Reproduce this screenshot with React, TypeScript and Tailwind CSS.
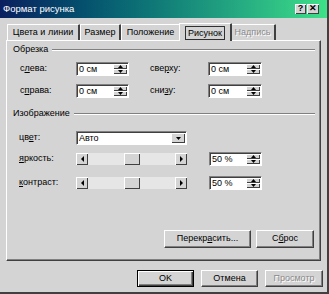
import React from "react";

const raised =
  "border border-t-white border-l-white border-r-[#404040] border-b-[#404040] shadow-[inset_-1px_-1px_0_#808080]";
const sunken =
  "border border-t-[#808080] border-l-[#808080] border-r-white border-b-white shadow-[inset_1px_1px_0_#404040]";
const softRaised = "bg-[#d4d4d4] shadow-[inset_1px_1px_0_#ffffff,inset_-1px_-1px_0_#404040]";

function Tri({ dir }: { dir: "up" | "down" | "left" | "right" }) {
  const d =
    dir === "up"
      ? "M0 3 L2.5 0 L5 3 Z"
      : dir === "down"
      ? "M0 0 L5 0 L2.5 3 Z"
      : dir === "left"
      ? "M3 0 L3 6 L0 3 Z"
      : "M0 0 L0 6 L3 3 Z";
  const w = dir === "up" || dir === "down" ? 5 : 3;
  const h = dir === "up" || dir === "down" ? 3 : 6;
  return (
    <svg width={w} height={h} viewBox={`0 0 ${w} ${h}`}>
      <path d={d} fill="#000" />
    </svg>
  );
}

function Spin({ value, w }: { value: string; w: string }) {
  return (
    <div className={`${w} h-full bg-white flex ${sunken}`}>
      <div className="flex-1 flex items-center pl-[2px] pt-[1px]">{value}</div>
      <div className="w-[15px] h-full flex flex-col py-[1px] pr-[1px]">
        <div className={`flex-1 flex items-center justify-center ${softRaised}`}>
          <Tri dir="up" />
        </div>
        <div className={`flex-1 flex items-center justify-center ${softRaised}`}>
          <Tri dir="down" />
        </div>
      </div>
    </div>
  );
}

function Scroll() {
  return (
    <div className="w-[111px] h-[12px] flex bg-[#e6e6e6]">
      <div className={`w-[12px] h-[12px] flex items-center justify-center ${softRaised}`}>
        <Tri dir="left" />
      </div>
      <div className="w-[36px]" />
      <div className={`w-[16px] h-[12px] ${softRaised}`} />
      <div className="flex-1" />
      <div className={`w-[12px] h-[12px] flex items-center justify-center ${softRaised}`}>
        <Tri dir="right" />
      </div>
    </div>
  );
}

function Group({ title }: { title: string }) {
  return (
    <div className="h-[12px] flex items-center pl-[6px] pr-[5px]">
      <span className="pr-[4px]">{title}</span>
      <div className="flex-1 h-[2px] border-t border-t-[#808080] border-b border-b-white" />
    </div>
  );
}

function Btn({
  children,
  w,
  def,
  disabled,
}: {
  children: React.ReactNode;
  w: string;
  def?: boolean;
  disabled?: boolean;
}) {
  return (
    <div
      className={`${w} h-full flex items-center justify-center ${
        def
          ? "border border-black shadow-[inset_1px_1px_0_#ffffff,inset_-1px_-1px_0_#404040,inset_-2px_-2px_0_#808080]"
          : raised
      } ${disabled ? "text-[#8a8a8a] [text-shadow:1px_1px_0_#fff]" : ""}`}
    >
      {children}
    </div>
  );
}

function Tab({
  children,
  w,
  active,
  disabled,
}: {
  children: React.ReactNode;
  w: string;
  active?: boolean;
  disabled?: boolean;
}) {
  return (
    <div
      className={`${w} ${
        active ? "h-[18px] -mb-[1px] -mx-[2px] relative z-10 bg-[#d4d4d4]" : "h-[16px]"
      } flex items-center justify-center border-t border-l border-t-white border-l-white border-r-2 border-r-[#404040] rounded-t-[1px] ${
        disabled ? "text-[#8a8a8a] [text-shadow:1px_1px_0_#fff]" : ""
      }`}
    >
      {active ? (
        <span className="border border-[#303030] px-[2px] leading-[10px] py-[1px]">{children}</span>
      ) : (
        children
      )}
    </div>
  );
}

export default function App() {
  return (
    <div className="w-[329px] h-[294px] bg-[#d4d4d4] font-['Liberation_Sans',Arial,sans-serif] text-[9px] text-black overflow-hidden flex flex-col border-r-2 border-b-2 border-r-[#404040] border-b-[#404040]">
      {/* title bar */}
      <div className="h-[18px] shrink-0 flex items-center pl-[3px] pr-[8px] bg-gradient-to-r from-[#0a1f5e] via-[#127e78] to-[#3ee088] text-white text-[9.5px]">
        <span className="flex-1">Формат рисунка</span>
        <div className={`w-[11px] h-[10px] flex items-center justify-center text-black font-bold text-[9px] ${softRaised}`}>?</div>
        <div className={`ml-[1px] w-[12px] h-[10px] flex items-center justify-center text-black font-bold text-[9px] ${softRaised}`}>✕</div>
      </div>

      {/* tabs */}
      <div className="mt-[5px] h-[17px] flex items-end pl-[7px]">
        <Tab w="w-[73px]">Цвета и линии</Tab>
        <Tab w="w-[41px]">Размер</Tab>
        <Tab w="w-[60px]">Положение</Tab>
        <Tab w="w-[53px]" active>Рисунок</Tab>
        <Tab w="w-[46px]">
          <span className="text-[#8a8a8a] [text-shadow:1px_1px_0_#fff]">Надпись</span>
        </Tab>
      </div>

      {/* panel */}
      <div className="mx-[6px] w-[315px] h-[221px] shrink-0 flex flex-col border border-t-white border-l-white border-r-[#404040] border-b-[#404040] shadow-[inset_-1px_-1px_0_#808080]">
        <div className="pt-[3px]">
          <Group title="Обрезка" />
        </div>

        <div className="mt-[6px] h-[14px] flex items-center pl-[13px]">
          <span className="w-[56px]">
            с<u>л</u>ева:
          </span>
          <Spin value="0 см" w="w-[53px]" />
          <span className="ml-[21px] w-[58px]">
            све<u>р</u>ху:
          </span>
          <Spin value="0 см" w="w-[54px]" />
        </div>

        <div className="mt-[8px] h-[14px] flex items-center pl-[13px]">
          <span className="w-[56px]">
            с<u>п</u>рава:
          </span>
          <Spin value="0 см" w="w-[53px]" />
          <span className="ml-[21px] w-[58px]">
            сни<u>з</u>у:
          </span>
          <Spin value="0 см" w="w-[54px]" />
        </div>

        <div className="mt-[10px]">
          <Group title="Изображение" />
        </div>

        <div className="mt-[11px] h-[14px] flex items-center pl-[12px]">
          <span className="w-[57px]">
            цв<u>е</u>т:
          </span>
          <div className={`w-[111px] h-full bg-white flex ${sunken}`}>
            <div className="flex-1 flex items-center pl-[2px] pt-[1px]">Авто</div>
            <div className="py-[1px] pr-[1px] h-full">
              <div className={`w-[14px] h-full flex items-center justify-center ${softRaised}`}>
                <Tri dir="down" />
              </div>
            </div>
          </div>
        </div>

        <div className="mt-[7px] h-[14px] flex items-center pl-[12px]">
          <span className="w-[57px]">
            <u>я</u>ркость:
          </span>
          <Scroll />
          <div className="ml-[22px] h-full flex">
            <Spin value="50 %" w="w-[53px]" />
          </div>
        </div>

        <div className="mt-[10px] h-[14px] flex items-center pl-[12px]">
          <span className="w-[57px]">
            <u>к</u>онтраст:
          </span>
          <Scroll />
          <div className="ml-[22px] h-full flex">
            <Spin value="50 %" w="w-[53px]" />
          </div>
        </div>

        <div className="flex-1" />

        <div className="h-[18px] flex justify-end gap-[5px] pr-[6px] mb-[12px]">
          <Btn w="w-[87px]">
            Перекр<u>а</u>сить...
          </Btn>
          <Btn w="w-[58px]">
            С<u>б</u>рос
          </Btn>
        </div>
      </div>

      {/* bottom buttons */}
      <div className="mt-[9px] h-[17px] flex justify-end gap-[7px] pr-[4px]">
        <Btn w="w-[57px]" def>
          OK
        </Btn>
        <Btn w="w-[57px]">Отмена</Btn>
        <Btn w="w-[58px]" disabled>
          Просмотр
        </Btn>
      </div>
    </div>
  );
}
